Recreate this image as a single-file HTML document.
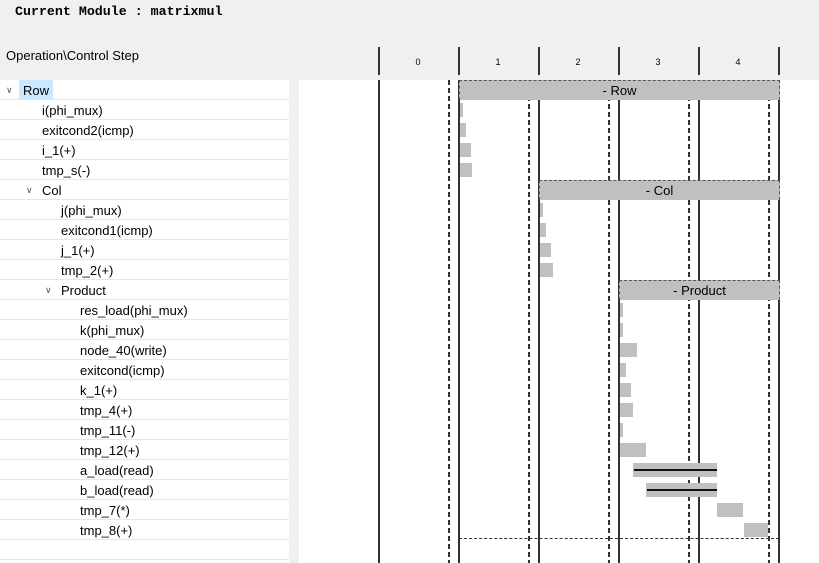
<!DOCTYPE html><html><head><style>
body{margin:0;width:819px;height:563px;background:#f0f0f0;position:relative;overflow:hidden;font-family:"Liberation Sans",sans-serif;font-size:13px;color:#000}
div{position:absolute;box-sizing:border-box}
.t{left:0;width:289px;height:20px;background:#fff;border-bottom:1px solid #e6e6e6;line-height:21px;white-space:nowrap}
.c{font-size:9px;color:#555}
.v{width:2px;background:#333;top:80px;height:483px}
.d{width:2px;top:80px;height:483px;background:repeating-linear-gradient(#333 0 5px,transparent 5px 8px)}
.h{width:2px;background:#333;top:47px;height:28px}
.n{top:57px;font-size:9px;width:20px;text-align:center}
.b{background:#c0c0c0;height:14px}
.g{background:#c0c0c0;height:20px;border:1px dashed #555;border-bottom:none;text-align:center;line-height:20px;font-size:13px}
.l{height:2px;background:#111}
</style></head><body>
<div style="left:15px;top:4px;font-family:'Liberation Mono',monospace;font-weight:bold;font-size:13.3px">Current Module : matrixmul</div>
<div style="left:6px;top:48px;font-size:13px">Operation\Control Step</div>
<div style="left:299px;top:80px;width:520px;height:483px;background:#fff"></div>
<div style="left:0;top:80px;width:289px;height:483px;background:#fff"></div>

<div class="t" style="top:80px"><span class="c" style="position:absolute;left:6px">&#8744;</span><span style="position:absolute;left:19px;background:#cce8ff;padding:0 4px 0 4px">Row</span></div>
<div class="t" style="top:100px;padding-left:42px">i(phi_mux)</div>
<div class="t" style="top:120px;padding-left:42px">exitcond2(icmp)</div>
<div class="t" style="top:140px;padding-left:42px">i_1(+)</div>
<div class="t" style="top:160px;padding-left:42px">tmp_s(-)</div>
<div class="t" style="top:180px"><span class="c" style="position:absolute;left:26px">&#8744;</span><span style="position:absolute;left:42px">Col</span></div>
<div class="t" style="top:200px;padding-left:61px">j(phi_mux)</div>
<div class="t" style="top:220px;padding-left:61px">exitcond1(icmp)</div>
<div class="t" style="top:240px;padding-left:61px">j_1(+)</div>
<div class="t" style="top:260px;padding-left:61px">tmp_2(+)</div>
<div class="t" style="top:280px"><span class="c" style="position:absolute;left:45px">&#8744;</span><span style="position:absolute;left:61px">Product</span></div>
<div class="t" style="top:300px;padding-left:80px">res_load(phi_mux)</div>
<div class="t" style="top:320px;padding-left:80px">k(phi_mux)</div>
<div class="t" style="top:340px;padding-left:80px">node_40(write)</div>
<div class="t" style="top:360px;padding-left:80px">exitcond(icmp)</div>
<div class="t" style="top:380px;padding-left:80px">k_1(+)</div>
<div class="t" style="top:400px;padding-left:80px">tmp_4(+)</div>
<div class="t" style="top:420px;padding-left:80px">tmp_11(-)</div>
<div class="t" style="top:440px;padding-left:80px">tmp_12(+)</div>
<div class="t" style="top:460px;padding-left:80px">a_load(read)</div>
<div class="t" style="top:480px;padding-left:80px">b_load(read)</div>
<div class="t" style="top:500px;padding-left:80px">tmp_7(*)</div>
<div class="t" style="top:520px;padding-left:80px">tmp_8(+)</div>
<div class="t" style="top:540px"></div>

<div class="h" style="left:378px"></div><div class="h" style="left:458px"></div><div class="h" style="left:538px"></div><div class="h" style="left:618px"></div><div class="h" style="left:698px"></div><div class="h" style="left:778px"></div>
<div class="n" style="left:408px">0</div><div class="n" style="left:488px">1</div><div class="n" style="left:568px">2</div><div class="n" style="left:648px">3</div><div class="n" style="left:728px">4</div>

<div class="v" style="left:378px"></div><div class="v" style="left:458px"></div><div class="v" style="left:538px"></div><div class="v" style="left:618px"></div><div class="v" style="left:698px"></div><div class="v" style="left:778px"></div>
<div class="d" style="left:448px"></div><div class="d" style="left:528px"></div><div class="d" style="left:608px"></div><div class="d" style="left:688px"></div><div class="d" style="left:768px"></div>

<div class="g" style="left:459px;top:80px;width:321px">- Row</div>
<div class="g" style="left:539px;top:180px;width:241px">- Col</div>
<div class="g" style="left:619px;top:280px;width:161px">- Product</div>

<div class="b" style="left:460px;top:103px;width:3px"></div>
<div class="b" style="left:460px;top:123px;width:6px"></div>
<div class="b" style="left:460px;top:143px;width:11px"></div>
<div class="b" style="left:460px;top:163px;width:12px"></div>
<div class="b" style="left:540px;top:203px;width:3px"></div>
<div class="b" style="left:540px;top:223px;width:6px"></div>
<div class="b" style="left:540px;top:243px;width:11px"></div>
<div class="b" style="left:540px;top:263px;width:13px"></div>
<div class="b" style="left:620px;top:303px;width:3px"></div>
<div class="b" style="left:620px;top:323px;width:3px"></div>
<div class="b" style="left:620px;top:343px;width:17px"></div>
<div class="b" style="left:620px;top:363px;width:6px"></div>
<div class="b" style="left:620px;top:383px;width:11px"></div>
<div class="b" style="left:620px;top:403px;width:13px"></div>
<div class="b" style="left:620px;top:423px;width:3px"></div>
<div class="b" style="left:620px;top:443px;width:26px"></div>
<div class="b" style="left:633px;top:463px;width:84px"><div class="l" style="left:1px;top:6px;width:83px"></div></div>
<div class="b" style="left:646px;top:483px;width:71px"><div class="l" style="left:1px;top:6px;width:70px"></div></div>
<div class="b" style="left:717px;top:503px;width:26px"></div>
<div class="b" style="left:744px;top:523px;width:24px"></div>
<div style="left:459px;top:538px;width:320px;height:1px;border-top:1px dashed #333"></div>
</body></html>
